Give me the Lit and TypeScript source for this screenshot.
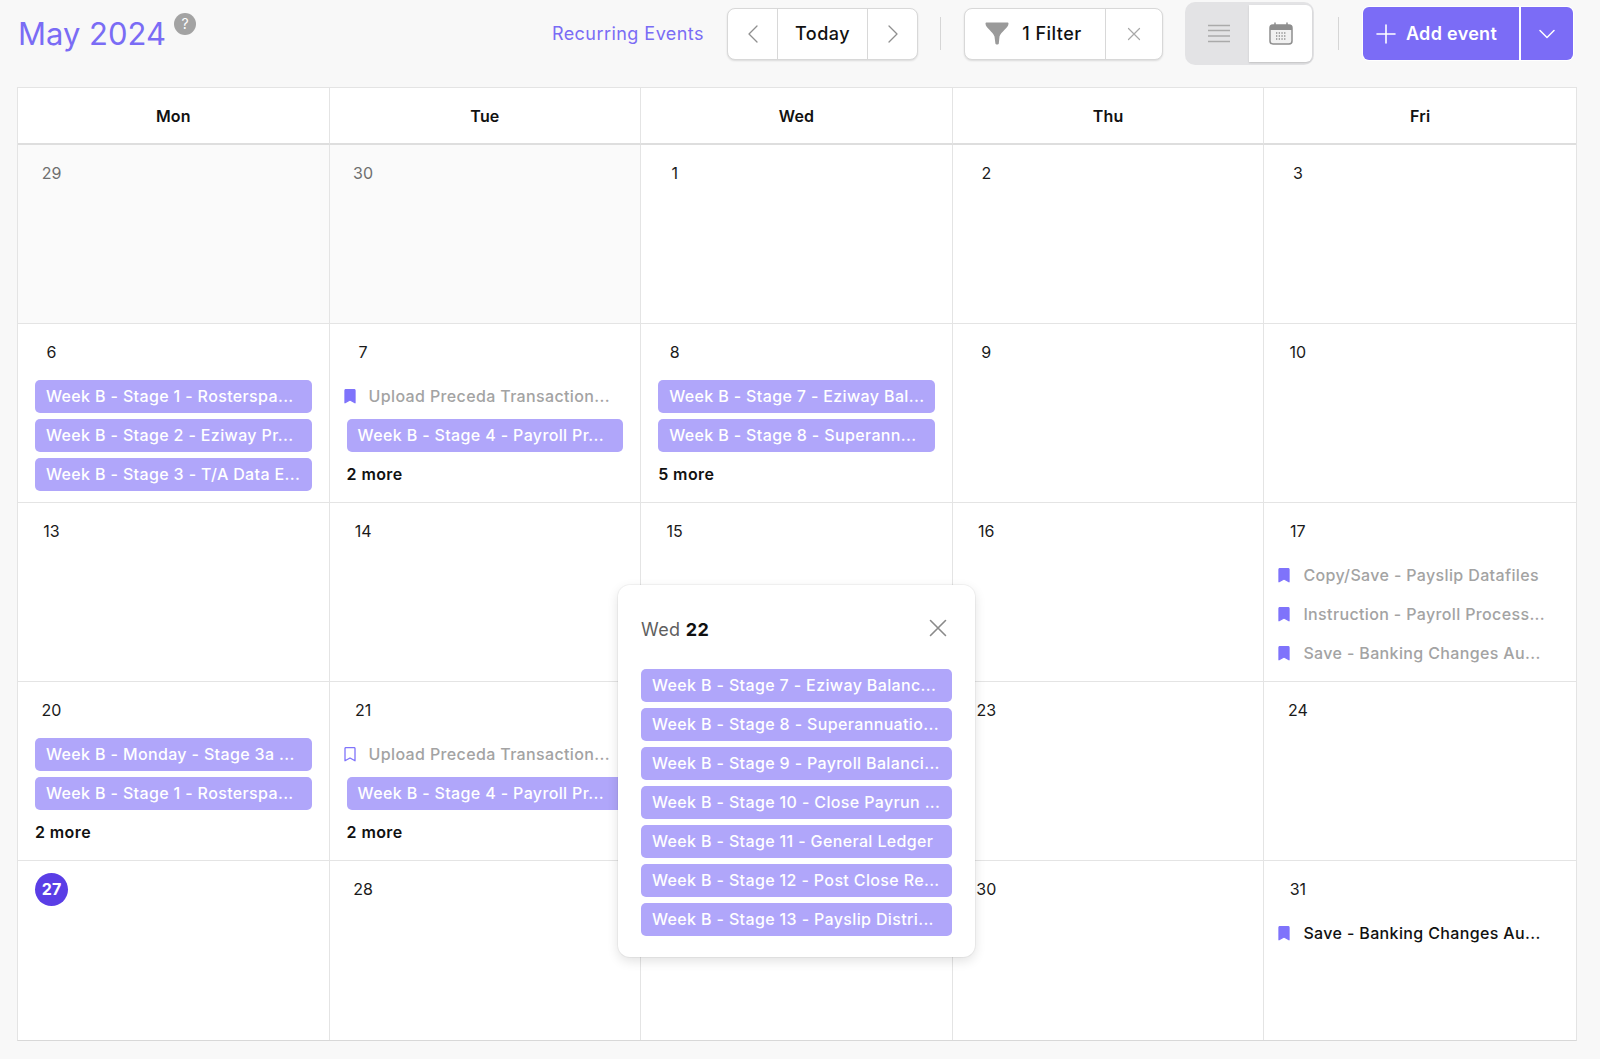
import { LitElement, html, css, svg } from "lit";
import { customElement } from "lit/decorators.js";

type Item = { t: "pill" | "note" | "noteo" | "noted" | "more"; x: string };
type Day = { n: string; muted?: boolean; prev?: boolean; today?: boolean; items?: Item[] };

const p = (x: string): Item => ({ t: "pill", x });
const n = (x: string): Item => ({ t: "note", x });
const m = (x: string): Item => ({ t: "more", x });

const days: Day[] = [
  { n: "29", muted: true, prev: true },
  { n: "30", muted: true, prev: true },
  { n: "1" }, { n: "2" }, { n: "3" },
  { n: "6", items: [p("Week B - Stage 1 - Rosterspa..."), p("Week B - Stage 2 - Eziway Pr..."), p("Week B - Stage 3 - T/A Data E...")] },
  { n: "7", items: [n("Upload Preceda Transaction..."), p("Week B - Stage 4 - Payroll Pr..."), m("2 more")] },
  { n: "8", items: [p("Week B - Stage 7 - Eziway Bal..."), p("Week B - Stage 8 - Superann..."), m("5 more")] },
  { n: "9" }, { n: "10" },
  { n: "13" }, { n: "14" }, { n: "15" }, { n: "16" },
  { n: "17", items: [n("Copy/Save - Payslip Datafiles"), n("Instruction - Payroll Process..."), n("Save - Banking Changes Au...")] },
  { n: "20", items: [p("Week B - Monday - Stage 3a ..."), p("Week B - Stage 1 - Rosterspa..."), m("2 more")] },
  { n: "21", items: [{ t: "noteo", x: "Upload Preceda Transaction..." }, p("Week B - Stage 4 - Payroll Pr..."), m("2 more")] },
  { n: "" }, { n: "23" }, { n: "24" },
  { n: "27", today: true }, { n: "28" }, { n: "" }, { n: "30" },
  { n: "31", items: [{ t: "noted", x: "Save - Banking Changes Au..." }] },
];

const popItems = [
  "Week B - Stage 7 - Eziway Balanc...",
  "Week B - Stage 8 - Superannuatio...",
  "Week B - Stage 9 - Payroll Balanci...",
  "Week B - Stage 10 - Close Payrun ...",
  "Week B - Stage 11 - General Ledger",
  "Week B - Stage 12 - Post Close Re...",
  "Week B - Stage 13 - Payslip Distri...",
];

const line = (d: string, w = 1.3, c = "#8f8f8f") =>
  svg`<path d=${d} fill="none" stroke=${c} stroke-width=${w} stroke-linecap="round" stroke-linejoin="round"/>`;

@customElement("app-root")
export class AppRoot extends LitElement {
  static styles = css`
    :host {
      display: block;
      height: 1059px;
      overflow: hidden;
      background: #f8f8f8;
      font-family: Inter, "Liberation Sans", sans-serif;
      color: #111;
      font-size: 16px;
    }
    svg { display: block; }
    .bar {
      display: flex;
      align-items: center;
      height: 67px;
      padding: 0 27px 0 18px;
      margin-bottom: 20px;
    }
    .title { display: flex; align-items: flex-start; gap: 8px; }
    .title h1 { margin: 0; font-size: 31px; line-height: 41px; font-weight: 400; color: #7a6cf5; }
    .help {
      width: 22px; height: 22px; border-radius: 50%; background: #a3a3a3; color: #fff;
      font-size: 14px; line-height: 22px; text-align: center;
    }
    .recurring { margin-left: auto; margin-right: 23px; color: #7a6cf5; font-size: 18px; letter-spacing: .45px; }
    .group {
      display: flex; height: 52px; box-sizing: border-box; background: #fff;
      border: 1px solid #d8d8d8; border-radius: 8px; box-shadow: 0 1px 2px rgba(0,0,0,.12);
      align-items: stretch; font-size: 18px; font-weight: 500; letter-spacing: .45px;
    }
    .group > div { display: flex; align-items: center; justify-content: center; }
    .group > div + div { border-left: 1px solid #d8d8d8; }
    .nav { width: 191px; margin-right: 22px; }
    .nav .prev-btn { width: 49px; }
    .nav .next-btn { width: 49px; }
    .nav .today { flex: 1; }
    .filter { width: 199px; margin-left: 23px; margin-right: 22px; }
    .filter .main { flex: 1; gap: 13px; padding-right: 3px; }
    .filter .x { width: 56px; }
    .sep { width: 1px; height: 33px; background: #d6d6d6; }
    .toggle {
      display: flex; box-sizing: border-box; width: 129px; height: 63px; padding: 3px 2px 3px 0;
      background: #e3e3e5; border-radius: 10px; margin-right: 24px;
    }
    .toggle .list { width: 64px; padding-left: 3px; box-sizing: border-box; display: flex; align-items: center; justify-content: center; }
    .toggle .cal {
      flex: 1; background: #fff; border-radius: 0 6px 6px 0; display: flex; align-items: center;
      justify-content: center; box-shadow: 0 1px 2px rgba(0,0,0,.15);
    }
    .add {
      display: flex; width: 210px; height: 53px; margin-left: 24px; border-radius: 6px; overflow: hidden;
      background: #7b6cf6; color: #fff; font-size: 18px; font-weight: 600; letter-spacing: .3px;
      box-shadow: 0 0 0 1px #fff;
    }
    .add .main { width: 158px; display: flex; align-items: center; gap: 10px; padding-left: 13px; box-sizing: border-box; border-right: 2px solid #fff; }
    .add .drop { flex: 1; display: flex; align-items: center; justify-content: center; }
    .wrap { position: relative; }
    .cal-grid {
      margin-left: 17px; width: 1560px; height: 954px; box-sizing: border-box;
      display: grid; grid-template-columns: repeat(5, 1fr); grid-template-rows: 57px repeat(5, 1fr);
      background: #fff; border: 1px solid #e4e4e4; border-bottom-color: #d8d8d8;
    }
    .head {
      display: flex; align-items: center; justify-content: center; font-weight: 600; font-size: 16px;
      border-right: 1px solid #e4e4e4; border-bottom: 2px solid #dedede; color: #111; letter-spacing: .15px;
    }
    .cell {
      border-right: 1px solid #e4e4e4; border-bottom: 1px solid #e4e4e4; box-sizing: border-box;
      padding: 12px 17px 0 17px; min-width: 0; overflow: hidden;
    }
    .cell:nth-child(5n), .head:nth-child(5) { border-right: 0; }
    .cell:nth-last-child(-n + 5) { border-bottom: 0; }
    .cell.prev { background: #fafafa; }
    .num {
      width: 33px; height: 33px; line-height: 33px; text-align: center; font-size: 16px; color: #1a1a1a;
      border-radius: 50%; margin-bottom: 11px;
    }
    .num.muted { color: #6f6f6f; }
    .num.today { background: #5a3ee6; color: #fff; font-weight: 700; }
    .items { display: flex; flex-direction: column; gap: 6px; }
    .pill {
      height: 33px; line-height: 33px; border-radius: 5px; background: #b0a6fa; color: #fff;
      padding: 0 11px; font-size: 16px; font-weight: 500; white-space: nowrap; overflow: hidden; letter-spacing: .36px;
    }
    .note {
      height: 33px; display: flex; align-items: center; gap: 13px; margin-left: -3px;
      color: #a3a3a3; font-size: 16px; font-weight: 500; white-space: nowrap; letter-spacing: .36px;
    }
    .note span { margin-top: -1px; }
    .note.dark { color: #111; }
    .more { height: 33px; line-height: 33px; font-weight: 600; font-size: 16px; color: #111; letter-spacing: .4px; }
    .pop {
      position: absolute; left: 618px; top: 498px; width: 357px; height: 372px; box-sizing: border-box;
      padding: 0 23px; background: #fff; border-radius: 12px;
      box-shadow: 0 4px 12px rgba(0,0,0,.12), 0 0 0 1px rgba(0,0,0,.04);
    }
    .pop-head {
      height: 84px; display: flex; justify-content: space-between; align-items: flex-start; padding-top: 34px;
      box-sizing: border-box; font-size: 18px; color: #5f5f5f; line-height: 22px; letter-spacing: .35px;
    }
    .pop-head b { color: #111; font-weight: 700; }
    .pop-head svg { margin-right: 5px; }
  `;

  bookmark(filled: boolean) {
    return html`<svg width="12" height="15" viewBox="0 0 12 15"><path d="M1 1.4 C1 .8 1.5.6 2 .6 H10 C10.5.6 11 .8 11 1.4 V13.8 L6 11 L1 13.8 Z" fill=${filled ? "#7f73fb" : "none"} stroke="#7f73fb" stroke-width="1.3" stroke-linejoin="round"/></svg>`;
  }

  item(i: Item) {
    if (i.t === "pill") return html`<div class="pill">${i.x}</div>`;
    if (i.t === "more") return html`<div class="more">${i.x}</div>`;
    return html`<div class="note ${i.t === "noted" ? "dark" : ""}">${this.bookmark(i.t !== "noteo")}<span>${i.x}</span></div>`;
  }

  render() {
    return html`
      <div class="bar">
        <div class="title"><h1>May 2024</h1><div class="help">?</div></div>
        <div class="recurring">Recurring Events</div>
        <div class="group nav">
          <div class="prev-btn"><svg width="12" height="20" viewBox="0 0 12 20">${line("M10 2 L2 10 L10 18")}</svg></div>
          <div class="today">Today</div>
          <div class="next-btn"><svg width="12" height="20" viewBox="0 0 12 20">${line("M2 2 L10 10 L2 18")}</svg></div>
        </div>
        <div class="sep"></div>
        <div class="group filter">
          <div class="main">
            <svg width="24" height="23" viewBox="0 0 24 23"><path d="M.5 1.5 C.5 .8 1 .5 1.5 .5 H22.5 C23 .5 23.5 .8 23.5 1.5 C23.5 6 16 9.5 14.5 14.5 L13.8 21.5 C13.6 22.8 10.6 22.8 10.4 21.5 L9.5 14.5 C8 9.5 .5 6 .5 1.5 Z" fill="#9a9a9a"/></svg>
            <span>1 Filter</span>
          </div>
          <div class="x"><svg width="14" height="14" viewBox="0 0 14 14">${line("M1.5 1.5 L12.5 12.5 M12.5 1.5 L1.5 12.5", 1.2, "#a8a8a8")}</svg></div>
        </div>
        <div class="toggle">
          <div class="list"><svg width="22" height="19" viewBox="0 0 22 19"><path d="M0 1.5 H22 M0 6.5 H22 M0 12 H22 M0 17.5 H22" stroke="#aaa" stroke-width="1.6"/></svg></div>
          <div class="cal"><svg width="24" height="23" viewBox="0 0 24 23">
            <rect x="1" y="3" width="22" height="19" rx="3" fill="#f1f1f1" stroke="#8e8e8e" stroke-width="1.5"/>
            <path d="M1 4.5 A2 2 0 0 1 3 3 H21 A2 2 0 0 1 23 4.5 V8 H1 Z" fill="#8e8e8e"/>
            <path d="M6 0.5 V4 M18 0.5 V4" stroke="#8e8e8e" stroke-width="1.5"/>
            <path d="M7 11 H17 M7 14 H17 M7 17 H17" stroke="#8e8e8e" stroke-width="1.3" stroke-dasharray="1.3 1.4"/>
          </svg></div>
        </div>
        <div class="sep"></div>
        <div class="add">
          <div class="main">
            <svg width="20" height="20" viewBox="0 0 20 20"><path d="M10 1 V19 M1 10 H19" stroke="#fff" stroke-width="1.6" stroke-linecap="round"/></svg>
            <span>Add event</span>
          </div>
          <div class="drop"><svg width="16" height="10" viewBox="0 0 16 10">${line("M1 1.5 L8 8.5 L15 1.5", 1.5, "#fff")}</svg></div>
        </div>
      </div>
      <div class="wrap">
        <div class="cal-grid">
          ${["Mon", "Tue", "Wed", "Thu", "Fri"].map((d) => html`<div class="head">${d}</div>`)}
          ${days.map(
            (d) => html`<div class="cell ${d.prev ? "prev" : ""}">
              <div class="num ${d.muted ? "muted" : ""} ${d.today ? "today" : ""}">${d.n}</div>
              <div class="items">${(d.items ?? []).map((i) => this.item(i))}</div>
            </div>`
          )}
        </div>
        <div class="pop">
          <div class="pop-head">
            <span>Wed <b>22</b></span>
            <svg width="18" height="18" viewBox="0 0 18 18">${line("M1.5 1.5 L16.5 16.5 M16.5 1.5 L1.5 16.5", 1.6, "#8a8a8a")}</svg>
          </div>
          <div class="items">${popItems.map((x) => html`<div class="pill">${x}</div>`)}</div>
        </div>
      </div>
    `;
  }
}
